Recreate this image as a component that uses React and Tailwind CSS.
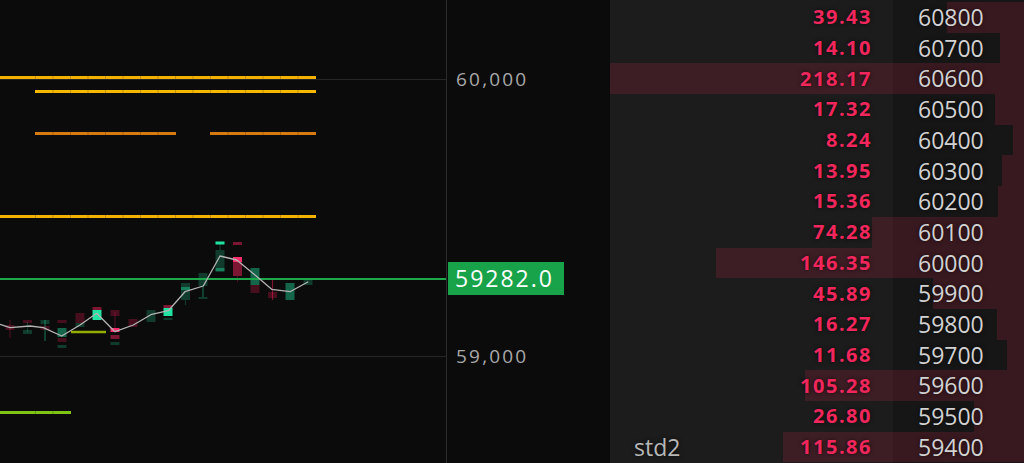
import React from "react";

const FONT = { fontFamily: '"Open Sans", "Noto Sans", sans-serif' };

const rows = [
  { amt: "39.43", price: "60800", bar: 77 },
  { amt: "14.10", price: "60700", bar: 24 },
  { amt: "218.17", price: "60600", bar: 414 },
  { amt: "17.32", price: "60500", bar: 29 },
  { amt: "8.24", price: "60400", bar: 11 },
  { amt: "13.95", price: "60300", bar: 22 },
  { amt: "15.36", price: "60200", bar: 26 },
  { amt: "74.28", price: "60100", bar: 152 },
  { amt: "146.35", price: "60000", bar: 308 },
  { amt: "45.89", price: "59900", bar: 91 },
  { amt: "16.27", price: "59800", bar: 27 },
  { amt: "11.68", price: "59700", bar: 17 },
  { amt: "105.28", price: "59600", bar: 219 },
  { amt: "26.80", price: "59500", bar: 50 },
  { amt: "115.86", price: "59400", bar: 241, label: "std2" },
];

const COL = {
  g: "rgba(34,197,140,0.26)",
  gm: "rgba(34,210,150,0.45)",
  G: "#22e3a2",
  r: "rgba(230,30,80,0.28)",
  rm: "rgba(235,35,90,0.5)",
  R: "#ff2d6b",
};

const candles = [
  { x: 10, wick: [320, 338, "r"], boxes: [[325, 330, "r"]] },
  { x: 27.5, wick: [322, 332, "g"], boxes: [[320, 323, "r"], [330, 334, "g"]] },
  { x: 45, wick: [320, 341, "gm"], boxes: [[320, 324, "g"], [326, 330, "r"]] },
  { x: 62, boxes: [[320, 323, "r"], [328, 337, "gm"], [338, 342, "r"], [345, 348, "g"]] },
  { x: 80, boxes: [[313, 323, "r"], [323, 327, "g"]] },
  { x: 97, boxes: [[307, 310, "rm"], [310, 320, "G"]] },
  { x: 115, wick: [312, 330, "r"], boxes: [[310, 316, "r"], [328, 332, "R"], [335, 339, "rm"], [342, 345, "g"]] },
  { x: 133, boxes: [[319, 327, "r"]] },
  { x: 151, boxes: [[310, 322, "g"]] },
  { x: 168, boxes: [[305, 308, "rm"], [308, 316, "G"], [318, 320, "g"]] },
  { x: 185.5, wick: [300, 305, "g"], boxes: [[283, 300, "g"], [287, 290, "gm"]] },
  { x: 203, wick: [286, 297, "gm"], boxes: [[273, 286, "g"], [297, 299, "g"]] },
  { x: 220, wick: [244, 250, "g"], boxes: [[241.5, 244.5, "G"], [250, 272, "g"], [268, 271, "gm"]] },
  { x: 237.5, wick: [276, 282, "r"], boxes: [[242, 245, "rm"], [257, 262, "R"], [262, 276, "rm"]] },
  { x: 255, boxes: [[268, 285, "gm"], [285, 293, "r"]] },
  { x: 272.5, wick: [278, 300, "rm"], boxes: [[292, 298, "r"]] },
  { x: 290, boxes: [[283, 300, "gm"]] },
  { x: 308, boxes: [[280, 285, "g"]] },
];

const linePts = [
  [0, 324.3], [10, 327.7], [30, 326], [43.3, 327.7], [61.7, 336], [80, 325],
  [96.7, 313.3], [115, 331.7], [133.3, 325], [151.7, 314.3], [168.3, 310.7],
  [185, 291.7], [203.3, 286], [220, 256], [236.7, 260], [255, 275],
  [271.7, 289.3], [290, 291.7], [308.3, 281.7],
];

function Level({ y, x1, x2, color }) {
  const ticks = [];
  for (let x = 35.5; x < x2 - 2; x += 17.5) {
    if (x > x1 + 2) ticks.push(x);
  }
  return (
    <g>
      <line x1={x1} y1={y} x2={x2} y2={y} stroke={color} strokeWidth="3" />
      {ticks.map((t) => (
        <line key={t} x1={t} y1={y - 1.5} x2={t} y2={y + 1.5} stroke="#000" strokeOpacity="0.2" strokeWidth="1" />
      ))}
    </g>
  );
}

function Chart() {
  return (
    <svg width="446" height="463" viewBox="0 0 446 463" className="block">
      <line x1="0" y1="79.5" x2="446" y2="79.5" stroke="#262626" strokeWidth="1" />
      <line x1="0" y1="356.5" x2="446" y2="356.5" stroke="#262626" strokeWidth="1" />
      <Level y={77.5} x1={0} x2={316} color="#f4b200" />
      <Level y={91.5} x1={35} x2={316} color="#f7b800" />
      <Level y={133.5} x1={35} x2={176} color="#d67a12" />
      <Level y={133.5} x1={210} x2={316} color="#d67a12" />
      <Level y={216.5} x1={0} x2={316} color="#f4b200" />
      <line x1="71" y1="332" x2="106" y2="332" stroke="#93ad00" strokeWidth="2.5" />
      <Level y={412.5} x1={0} x2={71} color="#80c414" />
      {candles.map((c, i) => (
        <g key={i}>
          {c.wick && (
            <line x1={c.x} y1={c.wick[0]} x2={c.x} y2={c.wick[1]} stroke={COL[c.wick[2]]} strokeWidth="1.2" />
          )}
          {c.boxes.map((b, j) => (
            <rect key={j} x={c.x - 4.5} y={b[0]} width="9" height={b[1] - b[0]} fill={COL[b[2]]} />
          ))}
        </g>
      ))}
      <line x1="0" y1="279" x2="446" y2="279" stroke="#1ea84c" strokeWidth="2" />
      <polyline
        points={linePts.map((p) => p.join(",")).join(" ")}
        fill="none"
        stroke="#b4b4b4"
        strokeWidth="1.3"
        strokeLinejoin="round"
      />
    </svg>
  );
}

export default function App() {
  return (
    <div className="flex h-[463px] w-[1024px] overflow-hidden bg-[#0b0b0b]" style={FONT}>
      <div className="h-full w-[446px] shrink-0">
        <Chart />
      </div>
      <div className="h-full w-px shrink-0 bg-[#2c2c2c]" />
      <div className="relative h-full w-[163px] shrink-0 bg-[#0b0b0b]">
        <div className="absolute left-[9px] top-[66px] text-[19px] leading-[26px] tracking-[2.2px] text-[#a8a8a8]">
          60,000
        </div>
        <div className="absolute left-[9px] top-[343px] text-[19px] leading-[26px] tracking-[2.2px] text-[#a8a8a8]">
          59,000
        </div>
        <div className="absolute left-[1px] top-[262px] flex h-[33px] w-[116px] items-center bg-[#18a34b] pl-[7px] text-[23px] tracking-[2px] text-white">
          59282.0
        </div>
      </div>
      <div className="relative flex h-full w-[414px] shrink-0 flex-col bg-[#1c1c1c] pt-[2px]">
        <div className="absolute bottom-0 right-0 top-0 w-[131px] bg-[#161616]" />
        {rows.map((r) => (
          <div key={r.price} className="relative flex h-[30.7px] shrink-0 items-center">
            <div
              className="absolute bottom-0 right-0 top-0 bg-[rgba(232,40,82,0.17)]"
              style={{ width: r.bar }}
            />
            <div className="relative flex w-[283px] shrink-0 items-center pr-[21px]">
              {r.label ? (
                <span className="pl-[24px] text-[23px] text-[#b8b8b8] [text-shadow:0_0_4px_rgba(0,0,0,0.7)]">
                  {r.label}
                </span>
              ) : null}
              <span className="ml-auto text-[20px] font-bold tracking-[1.5px] text-[#f0265c] [text-shadow:0_0_4px_rgba(0,0,0,0.7)]">
                {r.amt}
              </span>
            </div>
            <div className="relative pl-[25px] text-[23px] text-[#d2d2d2] [text-shadow:0_0_4px_rgba(0,0,0,0.7)]">
              {r.price}
            </div>
          </div>
        ))}
      </div>
    </div>
  );
}
